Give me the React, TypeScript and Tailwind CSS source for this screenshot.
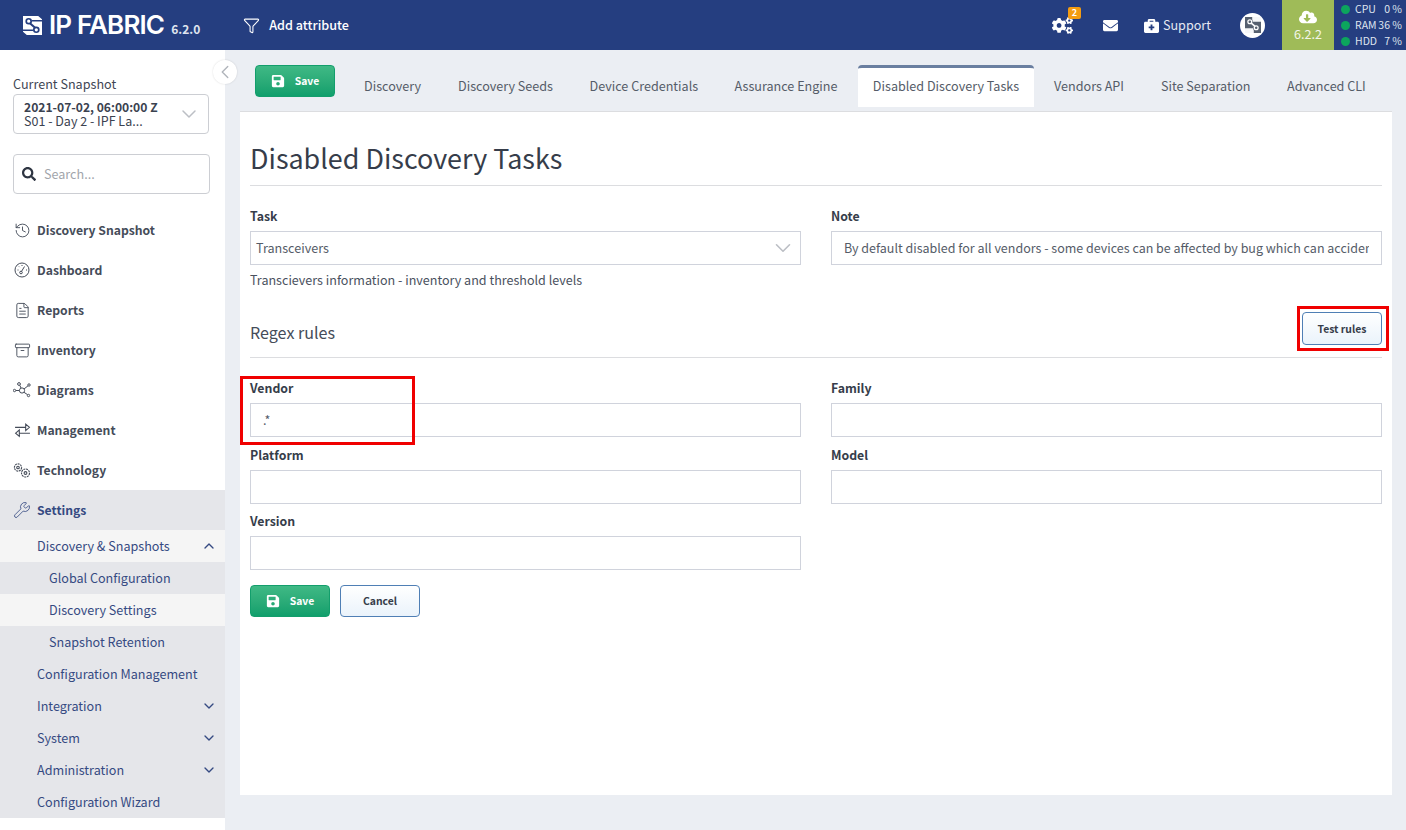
import { Archive, ChevronDown, ChevronLeft, ChevronUp, FileText, Filter, History, Wrench } from 'lucide-react';
import { FaBriefcaseMedical, FaCloudDownloadAlt, FaCogs, FaEnvelope, FaSave, FaSearch } from 'react-icons/fa';

const font = 'font-["Noto_Sans_CJK_SC","Noto_Sans",sans-serif]';

const tabs = [
  { label: 'Discovery', width: 'ml-[29px] w-[94px]' },
  { label: 'Discovery Seeds', width: 'w-[131.5px]' },
  { label: 'Device Credentials', width: 'w-[145px]' },
  { label: 'Assurance Engine', width: 'w-[123.5px]' },
];

function LogoMark() {
  return (
    <svg viewBox="0 0 20 20" className="h-full w-full">
      <rect width="20" height="20" fill="#fff" />
      <path d="M20 0v3.5L16 0zM0 20v-3.5L4 20z" fill="#253e80" />
      <path d="M6 6.5l8 7" stroke="#253e80" strokeWidth="2.2" fill="none" />
      <path d="M9.5 5H20M0 15h10.5" stroke="#253e80" strokeWidth="1.6" fill="none" />
      <circle cx="6" cy="5.5" r="2.6" fill="#fff" stroke="#253e80" strokeWidth="1.8" />
      <circle cx="14" cy="14.5" r="2.6" fill="#fff" stroke="#253e80" strokeWidth="1.8" />
    </svg>
  );
}

function AvatarMark() {
  return (
    <svg viewBox="0 0 20 20" className="h-full w-full">
      <rect width="20" height="20" fill="#56606f" />
      <path d="M6 6l8 7" stroke="#fff" strokeWidth="2" fill="none" />
      <path d="M9 0v3l1 3h10V0zM0 20h11v-3l-1-3H0z" fill="#fff" opacity="0.95" />
      <circle cx="6" cy="6" r="2.4" fill="#56606f" stroke="#fff" strokeWidth="1.6" />
      <circle cx="14" cy="13.5" r="2.4" fill="#56606f" stroke="#fff" strokeWidth="1.6" />
    </svg>
  );
}

function Header() {
  return (
    <header className="flex h-[50px] shrink-0 items-center bg-[#253e80] text-white">
      <div className="ml-[23px] h-[19px] w-[19px] shrink-0">
        <LogoMark />
      </div>
      <span className="ml-[7px] font-['Inter'] text-[26px] leading-none font-semibold tracking-[-0.85px]">IP FABRIC</span>
      <span className="mt-[8px] ml-[7px] text-[12px] leading-none font-bold text-[#dfe4ef]">6.2.0</span>
      <Filter size={17} strokeWidth={1.5} className="ml-[43px]" />
      <span className="ml-[9px] text-[12.6px] font-medium">Add attribute</span>

      <div className="relative ml-auto">
        <FaCogs size={21} />
        <span className="absolute -top-[8px] left-[16px] flex h-[12px] w-[13px] items-center justify-center rounded-[2px] bg-[#f39c12] text-[9px] leading-none font-bold">2</span>
      </div>
      <FaEnvelope size={15} className="ml-[30px]" />
      <FaBriefcaseMedical size={15} className="ml-[26px]" />
      <span className="ml-[4px] text-[12.6px] text-[#e6e9f2]">Support</span>
      <div className="ml-[29px] flex h-[25px] w-[25px] items-center justify-center rounded-full bg-white">
        <div className="h-[16px] w-[16px]">
          <AvatarMark />
        </div>
      </div>
      <div className="ml-[17px] flex h-full w-[52px] shrink-0 flex-col items-center justify-center bg-[#9fbb58]">
        <FaCloudDownloadAlt size={18} />
        <span className="text-[12.6px] leading-[16px] text-[#f3f6e8]">6.2.2</span>
      </div>
      <div className="flex w-[72px] shrink-0 flex-col pl-[7px] text-[10.5px] leading-[16px] whitespace-nowrap text-[#dfe4ef]">
        {[['CPU', '0'], ['RAM', '36'], ['HDD', '7']].map(([name, value]) => (
          <div key={name} className="flex items-center">
            <span className="h-[9px] w-[9px] shrink-0 rounded-full bg-[#0ca55d]" />
            <span className="ml-[5px]">{name}</span>
            <span className="ml-auto pr-[4px]">{value} %</span>
          </div>
        ))}
      </div>
    </header>
  );
}

function DiagramIcon() {
  return (
    <svg viewBox="0 0 18 16" className="h-[16px] w-[18px]" fill="none" stroke="#454c59" strokeWidth="1">
      <circle cx="9" cy="8.5" r="2.6" />
      <circle cx="6" cy="2" r="1.4" />
      <circle cx="16" cy="3" r="1.2" />
      <circle cx="1.5" cy="8.5" r="1.2" />
      <circle cx="15.5" cy="13.5" r="1.2" />
      <path d="M6.8 3.3L8 6M11 7l4-3.2M3 8.5h3.4M11 10.3l3.6 2.4" />
    </svg>
  );
}

function GaugeIcon() {
  return (
    <svg viewBox="0 0 16 16" className="h-[16px] w-[16px]" fill="none" stroke="#454c59" strokeWidth="1">
      <circle cx="8" cy="8" r="7" />
      <circle cx="7" cy="10.5" r="1.3" />
      <path d="M7.6 9.3L10.5 4.5M3.5 8h1M5 4.5l.6.6M8 3v1M12 8h1" />
    </svg>
  );
}

function SwapIcon() {
  return (
    <svg viewBox="0 0 16 14" className="h-[16px] w-[17px]" fill="none" stroke="#454c59" strokeWidth="1">
      <path d="M1 4.5h10M11 1.5v6l3.5-3zM15 10H5M5 7v6l-3.5-3z" />
    </svg>
  );
}

function TechIcon() {
  return (
    <svg viewBox="0 0 18 16" className="h-[17px] w-[18px]" fill="none" stroke="#454c59" strokeWidth="1.1">
      <circle cx="5" cy="5" r="3.6" strokeDasharray="2 0.7" />
      <circle cx="5" cy="5" r="1.3" />
      <circle cx="12.5" cy="10.5" r="4" strokeDasharray="2 0.7" />
      <circle cx="12.5" cy="10.5" r="1.4" />
    </svg>
  );
}

const mainNav = [
  { label: 'Discovery Snapshot', icon: <History size={17} strokeWidth={1.3} className="text-[#454c59]" /> },
  { label: 'Dashboard', icon: <GaugeIcon /> },
  { label: 'Reports', icon: <FileText size={17} strokeWidth={1.3} className="text-[#454c59]" /> },
  { label: 'Inventory', icon: <Archive size={17} strokeWidth={1.3} className="text-[#454c59]" /> },
  { label: 'Diagrams', icon: <DiagramIcon /> },
  { label: 'Management', icon: <SwapIcon /> },
  { label: 'Technology', icon: <TechIcon /> },
];

const subNav = [
  { label: 'Discovery & Snapshots', indent: 'pl-[37px]', active: true, chevron: 'up' },
  { label: 'Global Configuration', indent: 'pl-[49px]' },
  { label: 'Discovery Settings', indent: 'pl-[49px]', active: true },
  { label: 'Snapshot Retention', indent: 'pl-[49px]' },
  { label: 'Configuration Management', indent: 'pl-[37px]' },
  { label: 'Integration', indent: 'pl-[37px]', chevron: 'down' },
  { label: 'System', indent: 'pl-[37px]', chevron: 'down' },
  { label: 'Administration', indent: 'pl-[37px]', chevron: 'down' },
  { label: 'Configuration Wizard', indent: 'pl-[37px]' },
];

function Sidebar() {
  return (
    <aside className="relative w-[225px] shrink-0 bg-white">
      <div className="absolute top-[10px] -right-[12px] z-10 flex h-[24px] w-[24px] items-center justify-center rounded-full bg-white shadow-[0_0_2px_rgba(0,0,0,0.15)]">
        <ChevronLeft size={22} strokeWidth={1.5} className="text-[#b0b4bb]" />
      </div>
      <div className="pt-[25px] pl-[13px]">
        <div className="text-[12.6px] leading-[18px] text-[#3f4654]">Current Snapshot</div>
        <div className="mt-[1px] flex h-[40px] w-[196px] items-center justify-between rounded-[4px] border border-[#ccced3] pr-[7px] pl-[10px] text-[12.5px] leading-[14.5px] text-[#3b4250]">
          <div>
            <div className="text-[12.1px] font-bold">2021-07-02, 06:00:00 Z</div>
            <div>S01 - Day 2 - IPF La...</div>
          </div>
          <ChevronDown size={24} strokeWidth={1.5} className="text-[#bcbfc5]" />
        </div>
        <div className="mt-[20px] flex h-[40px] w-[197px] items-center rounded-[4px] border border-[#ccced3] pl-[8px]">
          <FaSearch size={14} className="text-[#2e3542]" />
          <span className="ml-[8px] text-[12.6px] text-[#a2a5ab]">Search...</span>
        </div>
      </div>
      <nav className="mt-[16px]">
        {mainNav.map((item) => (
          <div key={item.label} className="flex h-[40px] items-center text-[12.2px] font-bold text-[#454c59]">
            <span className="flex w-[37px] justify-center pl-[7px]">
              <span className="flex w-[18px] justify-center">{item.icon}</span>
            </span>
            <span>{item.label}</span>
          </div>
        ))}
        <div className="bg-[#e5e6ea]">
          <div className="flex h-[40px] items-center text-[12.2px] font-bold text-[#354a82]">
            <span className="flex w-[37px] justify-center pl-[7px]">
              <Wrench size={18} strokeWidth={1.1} />
            </span>
            <span>Settings</span>
          </div>
          {subNav.map((item) => (
            <div key={item.label} className={`flex h-[32px] items-center pr-[8px] text-[12.6px] text-[#354a82] ${item.indent} ${item.active ? 'bg-[#f5f5f5]' : ''}`}>
              <span>{item.label}</span>
              {item.chevron === 'up' && <ChevronUp size={16} strokeWidth={2} className="ml-auto" />}
              {item.chevron === 'down' && <ChevronDown size={16} strokeWidth={2} className="ml-auto" />}
            </div>
          ))}
        </div>
      </nav>
    </aside>
  );
}

function Field({ label, value, size = 'text-[12.6px]' }: { label: string; value?: string; size?: string }) {
  return (
    <div>
      <div className="text-[12.3px] leading-[18px] font-bold text-[#363d4a]">{label}</div>
      <div className={`mt-[6px] flex h-[34px] items-center border border-[#d0d3dc] bg-white px-[12px] text-[#555c68] ${size}`}>
        <span className="overflow-hidden whitespace-nowrap">{value}</span>
      </div>
    </div>
  );
}

function SaveButton() {
  return (
    <button className="flex h-[32px] w-[80px] shrink-0 items-center justify-center rounded-[4px] border border-[#139e6c] bg-gradient-to-b from-[#3fb985] to-[#0f9f6c] text-[10.4px] font-bold text-white">
      <FaSave size={14} />
      <span className="ml-[10px]">Save</span>
    </button>
  );
}

function OutlineButton({ label, className }: { label: string; className?: string }) {
  return (
    <button className={`w-[80px] rounded-[4px] border border-[#4f7fb5] bg-gradient-to-b from-white to-[#eaf3fb] text-[10.4px] font-bold text-[#363d4a] ${className ?? ''}`}>
      {label}
    </button>
  );
}

function Content() {
  return (
    <main className="flex-1 bg-[#ebeef3] pr-[14px] pl-[15px]">
      <div className="flex h-[62px] items-start border-b border-[#dcdde0] pt-[15px] pl-[15px]">
        <SaveButton />
        {tabs.map((tab) => (
          <div key={tab.label} className={`flex h-[42px] shrink-0 items-center text-[12.6px] text-[#555c68] ${tab.width}`}>
            {tab.label}
          </div>
        ))}
        <div className="flex h-[42px] w-[176px] shrink-0 items-center justify-center rounded-t-[4px] border-t-[3px] border-[#6a7fa0] bg-white pb-[2px] text-[12.6px] text-[#555c68]">
          Disabled Discovery Tasks
        </div>
        <div className="ml-[20px] flex h-[42px] w-[107px] shrink-0 items-center text-[12.6px] text-[#555c68]">Vendors API</div>
        <div className="flex h-[42px] w-[126px] shrink-0 items-center text-[12.6px] text-[#555c68]">Site Separation</div>
        <div className="flex h-[42px] shrink-0 items-center text-[12.6px] text-[#555c68]">Advanced CLI</div>
      </div>

      <div className="h-[683px] bg-white px-[10px]">
        <h1 className="flex h-[74px] items-end border-b border-[#dcdde0] pb-[7px] text-[26.9px] leading-[40px] text-[#363d4a]">Disabled Discovery Tasks</h1>

        <div className="mt-[21px] grid grid-cols-2 gap-x-[30px]">
          <div>
            <div className="text-[12.3px] leading-[18px] font-bold text-[#363d4a]">Task</div>
            <div className="mt-[6px] flex h-[34px] items-center justify-between border border-[#d0d3dc] pr-[4px] pl-[5px] text-[12.6px] text-[#555c68]">
              Transceivers
              <ChevronDown size={26} strokeWidth={1.5} className="text-[#bcbfc5]" />
            </div>
            <div className="mt-[6px] text-[12.56px] leading-[18px] text-[#4a515e]">Transcievers information - inventory and threshold levels</div>
          </div>
          <div>
            <Field label="Note" size="text-[12.5px]" value="By default disabled for all vendors - some devices can be affected by bug which can accidentally" />
          </div>
        </div>

        <div className="mt-[12px] flex h-[57px] items-end justify-between border-b border-[#dcdde0] pb-[12px]">
          <h2 className="mb-[1px] text-[16.1px] leading-[24px] text-[#454c59]">Regex rules</h2>
          <OutlineButton label="Test rules" className="h-[33px]" />
        </div>

        <div className="mt-[21px] grid grid-cols-2 gap-x-[30px] gap-y-[8.5px]">
          <Field label="Vendor" value=".*" />
          <Field label="Family" />
          <Field label="Platform" />
          <Field label="Model" />
          <Field label="Version" />
        </div>

        <div className="mt-[15px] flex gap-[10px]">
          <SaveButton />
          <OutlineButton label="Cancel" className="h-[32px]" />
        </div>
      </div>
    </main>
  );
}

export default function App() {
  return (
    <div className={`relative flex h-[830px] w-[1406px] flex-col overflow-hidden text-[#363d4a] ${font}`}>
      <Header />
      <div className="flex flex-1">
        <Sidebar />
        <Content />
      </div>
      {/* annotation boxes drawn over the screenshot */}
      <div className="pointer-events-none absolute top-[376px] left-[240px] h-[69px] w-[175px] border-[3px] border-[#f00000]" />
      <div className="pointer-events-none absolute top-[306px] left-[1297px] h-[45px] w-[92px] border-[3px] border-[#f00000]" />
    </div>
  );
}
